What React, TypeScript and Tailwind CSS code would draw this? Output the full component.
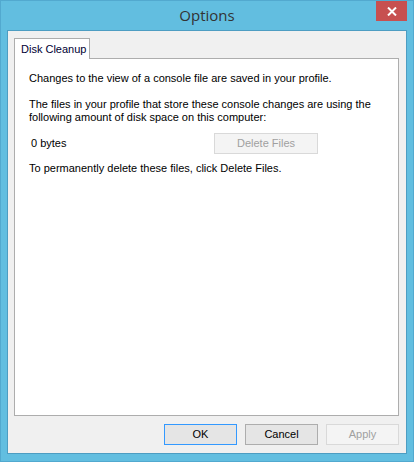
import React from "react";

export default function App() {
  const font = { fontFamily: '"Liberation Sans", Arial, sans-serif' };
  return (
    <div
      className="w-[414px] h-[462px] bg-[#62bee0] border border-[#52a9cf] flex flex-col text-[11px] text-black"
      style={font}
    >
      <div className="h-[29px] relative flex items-center justify-center shrink-0">
        <span className="text-[15px] text-[#333333] leading-none" style={{ fontFamily: '"Open Sans", "Liberation Sans", sans-serif' }}>
          Options
        </span>
        <div className="absolute right-[6px] top-0 w-[31px] h-[20px] bg-[#c75050] flex items-center justify-center">
          <svg width="10" height="9" viewBox="0 0 10 9">
            <path d="M1 0.5 L9 8.5 M9 0.5 L1 8.5" stroke="white" strokeWidth="2" />
          </svg>
        </div>
      </div>
      <div className="mx-[6px] mb-[7px] flex-1 border border-[#4d9dc2] bg-[#f0f0f0] flex flex-col pl-[6px] pr-[7px] pt-[7px] pb-[7px]">
        <div className="flex">
          <div className="w-[76px] h-[21px] bg-white border border-b-0 border-[#adadad] flex items-center pl-[6px] -mb-px relative z-10 leading-none whitespace-nowrap text-[#000033]">
            Disk Cleanup
          </div>
        </div>
        <div className="h-[358px] bg-white border border-[#adadad] pl-[14px] pt-[13px] flex flex-col leading-[13px] whitespace-nowrap">
          <div>Changes to the view of a console file are saved in your profile.</div>
          <div className="mt-[13px]">The files in your profile that store these console changes are using the</div>
          <div>following amount of disk space on this computer:</div>
          <div className="mt-[9px] flex items-center">
            <span className="pl-[2px] w-[185px]">0 bytes</span>
            <div className="w-[104px] h-[21px] bg-[#f4f4f4] border border-[#d9d9d9] text-[#a0a0a0] flex items-center justify-center">
              Delete Files
            </div>
          </div>
          <div className="mt-[8px]">To permanently delete these files, click Delete Files.</div>
        </div>
        <div className="flex justify-end gap-[8px] mt-[8px]">
          <div className="w-[73px] h-[21px] bg-[#e5e5e5] border border-[#3399ff] flex items-center justify-center">OK</div>
          <div className="w-[73px] h-[21px] bg-[#e5e5e5] border border-[#adadad] flex items-center justify-center">Cancel</div>
          <div className="w-[73px] h-[21px] bg-[#f4f4f4] border border-[#d9d9d9] text-[#a0a0a0] flex items-center justify-center">Apply</div>
        </div>
      </div>
    </div>
  );
}
